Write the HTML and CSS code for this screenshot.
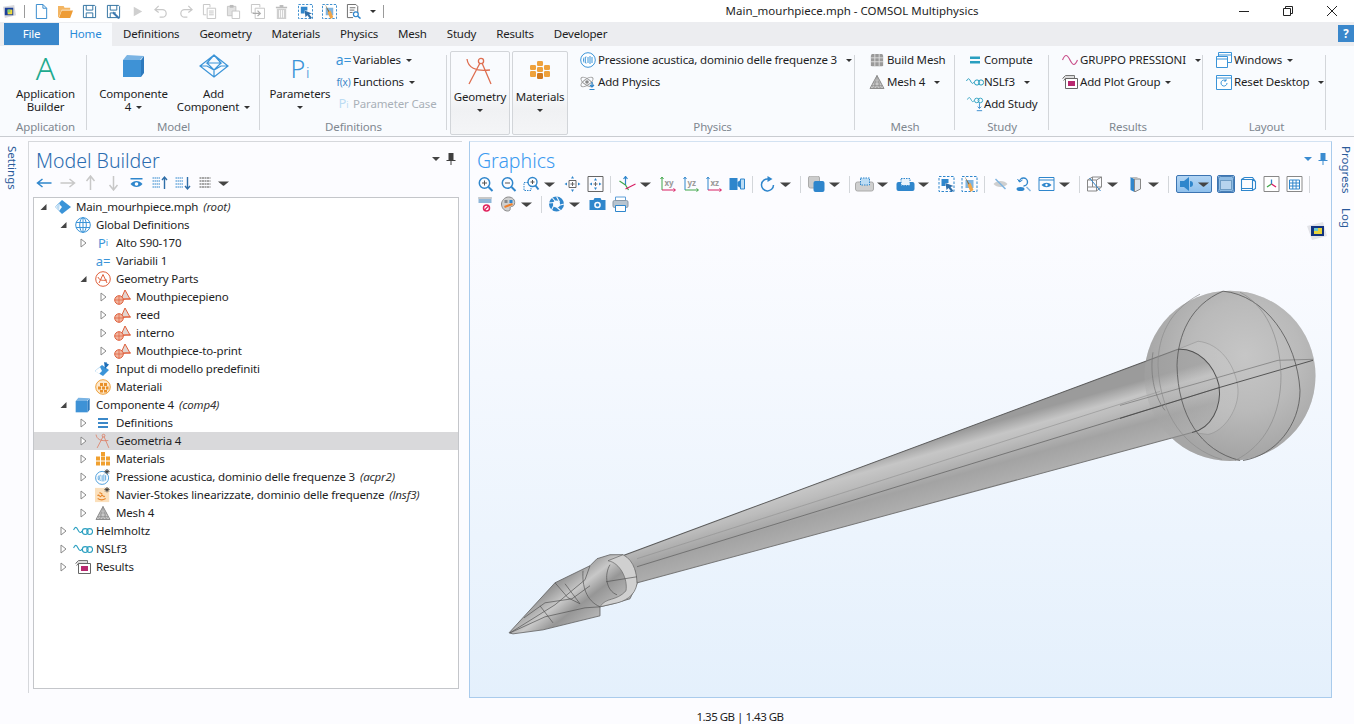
FILE: index.html
```html
<!DOCTYPE html>
<html lang="en">
<head>
<meta charset="utf-8">
<title>Main_mourhpiece.mph - COMSOL Multiphysics</title>
<link rel="stylesheet" href="styles.css">
</head>
<body>
<svg class="defs" width="0" height="0" aria-hidden="true">
<defs>
<symbol id="new" viewBox="0 0 16 16"><path d="M2.500 .5h7l4 4v11h-11z M9.500 .5v4h4" fill="#fff" stroke="#2f86cc"/></symbol>
<symbol id="open" viewBox="0 0 16 16"><path d="M0 2h6l1 2h6v2H4L1 14H0z" fill="#f3b562"/><path d="M4 7h12l-3 8H1z" fill="#ee9c35"/></symbol>
<symbol id="save" viewBox="0 0 16 16"><path d="M1.500 1.500h12l1 1v12h-13z" fill="#fff" stroke="#2c6f9f"/><path d="M4.500 1.500v5h7v-5M4.500 14.500v-5h7v5" fill="none" stroke="#2c6f9f"/></symbol>
<symbol id="saveas" viewBox="0 0 16 16"><path d="M1.500 1.500h12l1 1v12h-13z" fill="#fff" stroke="#2c6f9f"/><path d="M4.500 1.500v5h7v-5M4.500 14.500v-5h6" fill="none" stroke="#2c6f9f"/><path d="M8 8l7 7-2 1-6-6z" fill="#3d78b0"/></symbol>
<symbol id="play" viewBox="0 0 16 16"><path d="M4 3l9 5-9 5z" fill="#cfcfcf"/></symbol>
<symbol id="undo" viewBox="0 0 16 16"><path d="M5 2L1 6l4 3M1 6h8a4 4 0 0 1 0 8H6" fill="none" stroke="#c8c8c8" stroke-width="1.300"/></symbol>
<symbol id="redo" viewBox="0 0 16 16"><path d="M11 2l4 4-4 3M15 6H7a4 4 0 0 0 0 8h3" fill="none" stroke="#c8c8c8" stroke-width="1.300"/></symbol>
<symbol id="copy" viewBox="0 0 16 16"><path d="M1.500 .5h7v3M1.500 .5v11h3" fill="none" stroke="#c4c4c4"/><path d="M5.500 4.500h9v11h-9zM7.500 7.500h5M7.500 9.500h5M7.500 11.500h5" fill="#fff" stroke="#c4c4c4"/></symbol>
<symbol id="paste" viewBox="0 0 16 16"><path d="M1.500 2.500h9v10h-9z" fill="#e2e2e2" stroke="#c4c4c4"/><path d="M4 1h4v3H4z" fill="#bbb"/><path d="M6.500 7.500h8v8h-8z" fill="#fff" stroke="#c4c4c4"/></symbol>
<symbol id="dup" viewBox="0 0 16 16"><path d="M1.500 .5h9v3M1.500 .5v9h3M5.500 4.500h10v11h-10z" fill="none" stroke="#c4c4c4"/><path d="M3 10h8M8 7l3 3-3 3" fill="none" stroke="#aaa" stroke-width="1.300"/></symbol>
<symbol id="del" viewBox="0 0 16 16"><path d="M2 3h12v1.500H2zM6 1h4v2H6z" fill="#bdbdbd"/><path d="M3 5h10v11H3z" fill="#cfcfcf"/><path d="M6 6.500v8M8 6.500v8M10 6.500v8" stroke="#fff"/></symbol>
<symbol id="sel" viewBox="0 0 16 16"><path d="M.5 .5h15v15H.5z" fill="none" stroke="#2f86cc" stroke-dasharray="2.500 1.500"/><path d="M3 3h7v4L7 7v3H3z" fill="#2f86cc"/><path d="M7 7l8 3-3 1 3 4-2 1-3-4-2 2z" fill="#2f6ea8"/></symbol>
<symbol id="clr" viewBox="0 0 16 16"><path d="M.5 .5h15v15H.5z" fill="none" stroke="#2f86cc" stroke-dasharray="2.500 1.500"/><path d="M4 4h8v8H4z" fill="#7fb4e0"/><path d="M3 0l5 8-1 1z" fill="#8b6a35"/><path d="M6 9l3-2 3 7-3 2z" fill="#f0a64a"/></symbol>
<symbol id="find" viewBox="0 0 16 16"><path d="M1.500 .5h9l2 2v7M1.500 .5v14h6M4 4h6M4 6.500h5M4 9h3" fill="none" stroke="#666"/><circle cx="10.500" cy="11" r="2.600" fill="#fff" stroke="#2f86cc" stroke-width="1.300"/><path d="M12.500 13l3 2.500" stroke="#2f86cc" stroke-width="1.600"/></symbol>
<symbol id="logo" viewBox="0 0 16 16"><path d="M1 3l12-2 2 11-12 3z" fill="#d9d9dc"/><path d="M3 4h9v8H3z" fill="#1b3f9b"/><path d="M6 6h5v5H6z" fill="#f4d93c"/><path d="M6 6h3v3H6z" fill="#7ccf7a"/></symbol>
<symbol id="cube" viewBox="0 0 24 24"><path d="M5 1l17 1-4 4H1z" fill="#7ab4e4"/><path d="M1 6h18v17H1z" fill="#3e92d6"/><path d="M19 6l3-4v17l-3 4z" fill="#2d79bd"/></symbol>
<symbol id="addcomp" viewBox="0 0 30 24"><path d="M15 1l14 11-14 11L1 12zM15 1l-7 8h14zM8 9l7 7 7-7M1 12h7l7 4 7-4h7M15 16v7" fill="none" stroke="#3b94d8" stroke-width="1.200"/></symbol>
<symbol id="comp" viewBox="0 0 28 30"><circle cx="15" cy="5" r="2.600" fill="none" stroke="#de6e50" stroke-width="1.300"/><path d="M14 7L3 28M16 7l9 21M1 3c1 8 8 13 23 11" fill="none" stroke="#de6e50" stroke-width="1.300"/></symbol>
<symbol id="matl" viewBox="0 0 22 20"><g fill="#eea13c"><rect x="8" y="1" width="6" height="5" rx="1.200"/><rect x="1" y="5" width="6" height="5" rx="1.200"/><rect x="8" y="7" width="6" height="5" rx="1.200"/><rect x="15" y="5" width="6" height="5" rx="1.200"/><rect x="1" y="11" width="6" height="6" rx="1.200"/></g><rect x="8" y="13" width="6" height="6" rx="1.200" fill="#d27a1f"/><rect x="15" y="11" width="6" height="6" rx="1.200" fill="#eea13c"/></symbol>
<symbol id="acou" viewBox="0 0 16 16"><circle cx="8" cy="8" r="7.300" fill="#fff" stroke="#3b94d8"/><path d="M8 5v6M10 4v8M12 5v6M6 4.500c-1 2-1 5 0 7M4 5.500c-.6 1.600-.6 3.400 0 5" fill="none" stroke="#3b94d8"/></symbol>
<symbol id="addphys" viewBox="0 0 16 16"><g fill="none" stroke="#9a9a9a"><ellipse cx="7" cy="8" rx="7" ry="3" transform="rotate(35 7 8)"/><ellipse cx="7" cy="8" rx="7" ry="3" transform="rotate(-35 7 8)"/></g><circle cx="7" cy="8" r="1.800" fill="#888"/><path d="M12 8v5M10 11l2 2 2-2M9.500 15.500h5" fill="none" stroke="#2f86cc" stroke-width="1.200"/></symbol>
<symbol id="build" viewBox="0 0 16 16"><path d="M2 1h12l1 2v11l-1 1H2l-1-1V3z" fill="#9a9a9a"/><path d="M1 5.500h14M1 10h14M5.500 1v14M10.500 1v14" stroke="#e0e0e0"/></symbol>
<symbol id="mesh" viewBox="0 0 16 16"><path d="M8 1.500l7 13H1z" fill="#c9c9c9" stroke="#8d8d8d"/><path d="M4.500 8h7M3 11.500h10M8 1.500L5 14.500M8 1.500l3 13M4.500 8L8 14.500 11.500 8M3 11.500L5 14.500M13 11.500l-2 3" fill="none" stroke="#8d8d8d" stroke-width=".6"/></symbol>
<symbol id="compute" viewBox="0 0 16 16"><path d="M3 4.500h10v2.500H3zM3 9h10v2.500H3z" fill="#2a9fc0"/></symbol>
<symbol id="study" viewBox="0 0 18 12"><path d="M.5 5C2 2 3 2 4.500 5S7 8 8 6" fill="none" stroke="#2a9fc0"/><circle cx="11" cy="6.500" r="2.600" fill="none" stroke="#2a9fc0"/><circle cx="15" cy="6.500" r="2.600" fill="none" stroke="#2a9fc0"/></symbol>
<symbol id="addstudy" viewBox="0 0 18 18"><path d="M.5 4C2 1 3 1 4.500 4S7 7 8 5" fill="none" stroke="#2a9fc0"/><circle cx="11" cy="5" r="2.600" fill="none" stroke="#2a9fc0"/><circle cx="15" cy="5" r="2.600" fill="none" stroke="#2a9fc0"/><path d="M14 8v6M12 12l2 2 2-2M11 16.500h6" fill="none" stroke="#2f86cc"/></symbol>
<symbol id="plot" viewBox="0 0 16 10"><path d="M.5 5C3-1 5-1 8 5s5 6 7.500 0" fill="none" stroke="#c94f8a" stroke-width="1.200"/></symbol>
<symbol id="addplot" viewBox="0 0 16 16"><path d="M.5 4.500l3-3h9v9" fill="#ddd" stroke="#777"/><path d="M1.500 6.500l2-2h10v9" fill="#eee" stroke="#777"/><path d="M3.500 4.500h12v10h-12z" fill="#fff" stroke="#666"/><path d="M6 7h7v5H6z" fill="#b8286f"/></symbol>
<symbol id="win" viewBox="0 0 16 16"><path d="M2.500 .5h13v10h-13zM2.500 3h13" fill="#fff" stroke="#3b94d8"/><path d="M.5 4.500h11v11H.5zM.5 7h11" fill="#fff" stroke="#3b94d8"/></symbol>
<symbol id="reset" viewBox="0 0 16 16"><path d="M.5 1.500h15v14H.5zM.5 4h15" fill="#fff" stroke="#3b94d8"/><path d="M11 9a3 3 0 1 1-1-2.200M10 5v2H8" fill="none" stroke="#3b94d8"/></symbol>
<symbol id="root" viewBox="0 0 18 16"><path d="M1 8l7-7 9 7-9 7z" fill="#3b94d8"/><path d="M1 8l4-3 3 3-3 4z" fill="#fff"/><path d="M2 8l4-4-1 8z" fill="#bcdcf4"/></symbol>
<symbol id="globe" viewBox="0 0 16 16"><circle cx="8" cy="8" r="7.300" fill="#fff" stroke="#3b94d8"/><ellipse cx="8" cy="8" rx="3.300" ry="7.300" fill="none" stroke="#3b94d8"/><path d="M8 .7v14.600M1 5.500h14M1 10.500h14" stroke="#3b94d8"/></symbol>
<symbol id="gparts" viewBox="0 0 16 16"><circle cx="8" cy="8" r="7.300" fill="#fff" stroke="#e0603c"/><path d="M8 3.500L4 12M8 3.500L12 12M3 6c1 3 4 4 9 3" fill="none" stroke="#e0603c"/></symbol>
<symbol id="part" viewBox="0 0 18 16"><path d="M11 1l5 9H7z" fill="#e3d5d0" stroke="#e0603c"/><path d="M6 11l6-1h5" fill="none" stroke="#e0603c"/><circle cx="5" cy="11" r="4.300" fill="#f0b49d" stroke="#e0603c"/><path d="M.7 11h8.600M5 6.700v8.600" stroke="#e0603c" stroke-width=".7"/></symbol>
<symbol id="input" viewBox="0 0 18 16"><path d="M1 10l7-6 7 5-6 6z" fill="#3b94d8"/><path d="M1 10l5-4 2 4-3 3z" fill="#fff"/><path d="M10 1l5 2.500L11 8z" fill="#1f6fb8"/><path d="M12 1v5" stroke="#1f6fb8"/></symbol>
<symbol id="matcirc" viewBox="0 0 16 16"><circle cx="8" cy="8" r="7.300" fill="#fde8cc" stroke="#eea13c"/><path d="M5 4h3v3H5zM9 4h3v3H9zM3 7.500h3v3H3zM7 7.500h3v3H7zM11 7.500h2.500v3H11zM5 11h3v2.500H5zM9 11h3v2.500H9z" fill="#e8902a"/></symbol>
<symbol id="lines" viewBox="0 0 16 16"><path d="M3 3h10v2H3zM3 7h10v2H3zM3 11h10v2H3z" fill="#3b88c8"/></symbol>
<symbol id="matsq" viewBox="0 0 16 16"><path d="M6 1h4v4H6zM1 5.500h4v4H1zM6 5.500h4v4H6zM11 5.500h4v4h-4zM1 10.500h4v4H1zM6 10.500h4v4H6zM11 10.500h4v4h-4z" fill="#f0a030"/></symbol>
<symbol id="acast" viewBox="0 0 18 18"><circle cx="8" cy="10" r="7.300" fill="#fff" stroke="#3b94d8"/><path d="M8 7v7M10 6v8M12 7v6M6 6.500c-1 2-1 5 0 7M4 7.500c-.6 1.600-.6 3.400 0 5" fill="none" stroke="#3b94d8" stroke-width=".9"/><path d="M13.500 0v6M10.500 3h6M11.500 1l4 4M15.500 1l-4 4" stroke="#333" stroke-width="1"/></symbol>
<symbol id="navier" viewBox="0 0 18 18"><path d="M0 1h16v16H0z" fill="#fbe0bc"/><path d="M3 13c3 2 6 2 9 0M3 10c1-3 3 3 4 0s3 3 4 0M5 7c1-2 2 2 3 0" fill="none" stroke="#e8862a" stroke-width="1.200"/><path d="M13.500 0v6M10.500 3h6M11.500 1l4 4M15.500 1l-4 4" stroke="#333" stroke-width="1"/></symbol>
<symbol id="back" viewBox="0 0 16 16"><path d="M1 8h14M6 4L1 8l5 4" fill="none" stroke="#2f86cc" stroke-width="1.500"/></symbol>
<symbol id="fwd" viewBox="0 0 16 16"><path d="M1 8h14M10 4l5 4-5 4" fill="none" stroke="#c8c8c8" stroke-width="1.500"/></symbol>
<symbol id="up" viewBox="0 0 16 16"><path d="M8 15V1M4 6l4-5 4 5" fill="none" stroke="#c8c8c8" stroke-width="1.500"/></symbol>
<symbol id="down" viewBox="0 0 16 16"><path d="M8 1v14M4 10l4 5 4-5" fill="none" stroke="#c8c8c8" stroke-width="1.500"/></symbol>
<symbol id="eye" viewBox="0 0 16 16"><path d="M2 3h12v1.500H2z" fill="#2f86cc"/><path d="M2 9c3-4 9-4 12 0-3 4-9 4-12 0z" fill="#2f86cc"/><circle cx="8" cy="9" r="1.800" fill="#fff"/></symbol>
<symbol id="treeup" viewBox="0 0 16 16"><path d="M1 3h8M1 6h8M1 9h8M1 12h8" stroke="#2f86cc" stroke-dasharray="1.500 .5"/><path d="M13 14V3M10.500 5L13 2l2.500 3" fill="none" stroke="#2f6ea8" stroke-width="1.400"/></symbol>
<symbol id="treedn" viewBox="0 0 16 16"><path d="M1 3h8M1 6h8M1 9h8M1 12h8" stroke="#2f86cc" stroke-dasharray="1.500 .5"/><path d="M13 2v11M10.500 11l2.500 3 2.500-3" fill="none" stroke="#2f6ea8" stroke-width="1.400"/></symbol>
<symbol id="treelist" viewBox="0 0 16 16"><path d="M2 3h11M2 6h11M2 9h11M2 12h11" stroke="#8a8a8a" stroke-width="1.300" stroke-dasharray="2 .5"/></symbol>
<symbol id="zin" viewBox="0 0 16 16"><circle cx="7" cy="7" r="5.200" fill="none" stroke="#2f86cc" stroke-width="1.500"/><path d="M4.500 7h5M7 4.500v5" stroke="#555"/><path d="M11 11l4 4" stroke="#2f86cc" stroke-width="2"/></symbol>
<symbol id="zout" viewBox="0 0 16 16"><circle cx="7" cy="7" r="5.200" fill="none" stroke="#2f86cc" stroke-width="1.500"/><path d="M4.500 7h5" stroke="#555"/><path d="M11 11l4 4" stroke="#2f86cc" stroke-width="2"/></symbol>
<symbol id="zbox" viewBox="0 0 16 16"><path d="M.5 6.500h7v8h-7z" fill="none" stroke="#2f86cc" stroke-dasharray="1.500 1"/><circle cx="9" cy="6" r="4.500" fill="#fff" stroke="#2f86cc" stroke-width="1.400"/><path d="M7 6h4M9 4v4" stroke="#555"/><path d="M12 9.500l3 4" stroke="#2f86cc" stroke-width="2"/></symbol>
<symbol id="zsel" viewBox="0 0 16 16"><path d="M4.500 4.500h7v7h-7zM6 8h4M8 6v4" fill="#fff" stroke="#666"/><path d="M8 0l1.500 2.500h-3zM8 16l-1.500-2.500h3zM0 8l2.500-1.500v3zM16 8l-2.500 1.500v-3z" fill="#2f86cc"/></symbol>
<symbol id="zext" viewBox="0 0 16 16"><path d="M.5 .5h15v15H.5z" fill="none" stroke="#666"/><path d="M6 8h4M8 6v4" stroke="#666"/><path d="M8 2l1.500 2.500h-3zM8 14l-1.500-2.500h3zM2 8l2.500-1.500v3zM14 8l-2.500 1.500v-3z" fill="#2f86cc"/></symbol>
<symbol id="axes" viewBox="0 0 18 16"><path d="M7 9V1M5 3l2-2.500L9 3" fill="none" stroke="#2f86cc" stroke-width="1.200"/><path d="M7 9l-6-4" stroke="#3fa648" stroke-width="1.200"/><path d="M7 9l3 5" stroke="#3fa648" stroke-width="1.200"/><path d="M7 13l10-5" stroke="#d81e63" stroke-width="1.200"/></symbol>
<symbol id="pxy" viewBox="0 0 16 16"><path d="M1.500 2v12" stroke="#3fa648"/><path d="M1.500 14h13M13 12.500l2 1.500-2 1.500" fill="none" stroke="#d81e63"/><path d="M0 3l1.500-2L3 3" fill="none" stroke="#3fa648"/><text x="4" y="10" class="axt">xy</text></symbol>
<symbol id="pyz" viewBox="0 0 16 16"><path d="M1.500 2v12" stroke="#2f86cc"/><path d="M0 3l1.500-2L3 3" fill="none" stroke="#2f86cc"/><path d="M1.500 14h13M13 12.500l2 1.500-2 1.500" fill="none" stroke="#3fa648"/><text x="4" y="10" class="axt">yz</text></symbol>
<symbol id="pxz" viewBox="0 0 16 16"><path d="M1.500 2v12" stroke="#2f86cc"/><path d="M0 3l1.500-2L3 3" fill="none" stroke="#2f86cc"/><path d="M1.500 14h13M13 12.500l2 1.500-2 1.500" fill="none" stroke="#d81e63"/><text x="4" y="10" class="axt">xz</text></symbol>
<symbol id="cam" viewBox="0 0 16 16"><path d="M0 2h8v12H0z" fill="#2f86cc"/><path d="M8 6l3-2v8l-3-2z" fill="#2f86cc"/><path d="M11 3h4v10h-4z" fill="#bcdcf4" stroke="#2f86cc"/></symbol>
<symbol id="rot" viewBox="0 0 16 16"><path d="M9 3a6 6 0 1 0 5 6" fill="none" stroke="#2f86cc" stroke-width="1.500"/><path d="M8 0l5 3-5 3z" fill="#2f86cc"/></symbol>
<symbol id="trans" viewBox="0 0 16 16"><rect x="0" y="0" width="11" height="12" rx="2" fill="#ccc" stroke="#aaa"/><rect x="5" y="5" width="11" height="11" rx="2" fill="#2f86cc"/></symbol>
<symbol id="tray" viewBox="0 0 18 16"><path d="M0 8a2 2 0 0 1 2-2h14a2 2 0 0 1 2 2v5a2 2 0 0 1-2 2H2a2 2 0 0 1-2-2z" fill="#cfcfcf" stroke="#aaa"/><path d="M5 2h9v7H5z" fill="#bcdcf4" stroke="#2f86cc" stroke-dasharray="1.500 1"/></symbol>
<symbol id="trayb" viewBox="0 0 18 16"><path d="M0 8a2 2 0 0 1 2-2h14a2 2 0 0 1 2 2v5a2 2 0 0 1-2 2H2a2 2 0 0 1-2-2z" fill="#2f86cc"/><path d="M4.500 2.500h9v7h-9z" fill="#e8f2fb" stroke="#2f86cc" stroke-dasharray="1.500 1"/></symbol>
<symbol id="hide" viewBox="0 0 16 16"><path d="M1 8c3-4 11-4 14 0-3 4-11 4-14 0z" fill="#cfcfcf"/><path d="M3 3l10 10" stroke="#7fb4e0" stroke-width="1.500"/></symbol>
<symbol id="rehide" viewBox="0 0 16 16"><path d="M4 6a4 4 0 1 1 4 4" fill="none" stroke="#2f86cc" stroke-width="1.400"/><path d="M2 3l2 3 3-2" fill="none" stroke="#2f86cc"/><ellipse cx="5" cy="13" rx="4" ry="2" fill="#2f86cc"/><path d="M11 11l4 4" stroke="#7fb4e0" stroke-width="1.400"/></symbol>
<symbol id="wineye" viewBox="0 0 16 16"><path d="M.5 1.500h15v13H.5zM.5 4h15" fill="none" stroke="#2f86cc"/><path d="M3 9c3-3 7-3 10 0-3 3-7 3-10 0z" fill="#2f86cc"/><circle cx="8" cy="9" r="1.200" fill="#fff"/></symbol>
<symbol id="wire" viewBox="0 0 16 16"><path d="M1 4l5-3h9v10l-5 4H1zM1 4h9v11M10 4l5-3M6 1v10H1M6 11h9" fill="none" stroke="#888"/><path d="M3 2l11 13" stroke="#2f86cc"/></symbol>
<symbol id="planes" viewBox="0 0 16 16"><path d="M3 1l4 2v13l-4-2z" fill="#2f86cc"/><path d="M7 3h6v10l-6 3z" fill="#dfe6ec" stroke="#888"/><path d="M3 1h6l4 2H7z" fill="#bbb"/></symbol>
<symbol id="speaker" viewBox="0 0 16 16"><path d="M1 5h4l5-4v14l-5-4H1z" fill="#2f86cc"/><path d="M11 5a3 3 0 0 1 0 6z" fill="#2f86cc"/></symbol>
<symbol id="box" viewBox="0 0 16 16"><rect x=".5" y=".5" width="15" height="15" rx="2" fill="#8fbce4" stroke="#4a7fb5"/><rect x="2.500" y="4.500" width="11" height="9" fill="#b7d4ee" stroke="#6e9cc4"/></symbol>
<symbol id="boxb" viewBox="0 0 16 16"><path d="M1 3.500h11l3 2v7l-3 2H1zM4 1.500h8l3 4M1 3.500l3-2M12 3.500v11M1 12.500h11" fill="none" stroke="#2f86cc" stroke-width="1.100"/></symbol>
<symbol id="axbox" viewBox="0 0 16 16"><path d="M.5 .5h15v15H.5z" fill="#fff" stroke="#888"/><path d="M8 8V3.500" stroke="#2f86cc" stroke-width="1.300"/><path d="M8 8L3.500 11" stroke="#3fa648" stroke-width="1.300"/><path d="M8 8l4.500 3" stroke="#d81e63" stroke-width="1.300"/></symbol>
<symbol id="grid" viewBox="0 0 16 16"><path d="M.5 .5h15v15H.5z" fill="#fff" stroke="#888"/><path d="M3 4h10v9H3zM3 7h10M3 10h10M6.300 4v9M9.600 4v9" fill="none" stroke="#2f86cc"/></symbol>
<symbol id="noscene" viewBox="0 0 16 16"><path d="M1 1h13v6H1z" fill="#8fb6d8"/><path d="M1 1h13v2H1z" fill="#c8c8c8"/><circle cx="9" cy="12" r="3" fill="#fff" stroke="#e0245e" stroke-width="1.500"/><path d="M7 14l4-4" stroke="#e0245e" stroke-width="1.200"/></symbol>
<symbol id="palette" viewBox="0 0 16 16"><path d="M8 1c4 0 7 3 6 7-1 3-3 2-4 3s1 4-3 4-6-4-6-7 3-7 7-7z" fill="#cfcfcf" stroke="#888"/><rect x="4" y="4" width="3" height="3" fill="#888"/><rect x="9" y="4" width="3" height="3" fill="#2f86cc"/><path d="M4 11l8-3" stroke="#ee7f2c" stroke-width="2"/></symbol>
<symbol id="aperture" viewBox="0 0 16 16"><circle cx="8" cy="8" r="7.500" fill="#2f86cc"/><circle cx="8" cy="8" r="3.500" fill="#fafbff"/><path d="M8 .5L11 6M15.500 8L10 9.500M12 14.500L8 11M3 14L5.500 9M.5 7L6 6.500M4 2l3 3.500" stroke="#fafbff" stroke-width="1.100"/></symbol>
<symbol id="camera" viewBox="0 0 16 16"><path d="M0 4h4l1-2h6l1 2h4v10H0z" fill="#2f86cc"/><circle cx="8" cy="9" r="3.300" fill="#fafbff"/><circle cx="8" cy="9" r="1.800" fill="#2f86cc"/></symbol>
<symbol id="print" viewBox="0 0 16 16"><path d="M3 1h10v4H3z" fill="#fff" stroke="#5e9fd8"/><rect x=".5" y="4.500" width="15" height="7" rx="1.500" fill="#b8c4cf" stroke="#8a99a8"/><path d="M3 9.500h10v6H3z" fill="#fff" stroke="#2f86cc"/></symbol>
<symbol id="tw-open" viewBox="0 0 10 10"><path d="M8 2v6H2z" fill="#444"/></symbol>
<symbol id="tw-shut" viewBox="0 0 10 10"><path d="M2.500 1l5 4-5 4z" fill="#fff" stroke="#8a8a8a"/></symbol>
<symbol id="pin" viewBox="0 0 10 12"><path d="M2.500 0h5v7h2v1h-4v4h-1V8h-4V7h2z" fill="#3a8bd0"/></symbol>
<symbol id="colorcard" viewBox="0 0 20 18"><path d="M0 4l16-4 4 14-15 4z" fill="#e2e3e8"/><path d="M4 4h13v10H4z" fill="#12337f"/><path d="M7 6h8v6H7z" fill="#e8d43a"/><path d="M7 6h4v3H7z" fill="#6cc8d0"/></symbol>
</defs>
</svg>

<header class="titlebar">
  <div class="quick">
    <svg class="qi logo"><use href="#logo"/></svg>
    <span class="qsep"></span>
    <span class="q"><svg class="qi"><use href="#new"/></svg></span>
    <span class="q"><svg class="qi"><use href="#open"/></svg></span>
    <span class="q"><svg class="qi"><use href="#save"/></svg></span>
    <span class="q"><svg class="qi"><use href="#saveas"/></svg></span>
    <span class="q"><svg class="qi"><use href="#play"/></svg></span>
    <span class="q"><svg class="qi"><use href="#undo"/></svg></span>
    <span class="q"><svg class="qi"><use href="#redo"/></svg></span>
    <span class="q"><svg class="qi"><use href="#copy"/></svg></span>
    <span class="q"><svg class="qi"><use href="#paste"/></svg></span>
    <span class="q"><svg class="qi"><use href="#dup"/></svg></span>
    <span class="q"><svg class="qi"><use href="#del"/></svg></span>
    <span class="q"><svg class="qi"><use href="#sel"/></svg></span>
    <span class="q"><svg class="qi"><use href="#clr"/></svg></span>
    <span class="q"><svg class="qi"><use href="#find"/></svg></span>
    <span class="arrow qarrow"></span>
    <span class="qsep qsep-end"></span>
  </div>
  <div class="title">Main_mourhpiece.mph - COMSOL Multiphysics</div>
  <div class="winctl">
    <span class="wc"><svg width="12" height="12" viewBox="0 0 12 12"><path d="M1 6.500h10" stroke="#222"/></svg></span>
    <span class="wc"><svg width="12" height="12" viewBox="0 0 12 12"><path d="M1.500 3.500h7v7h-7zM3.500 3.500v-2h7v7h-2" fill="none" stroke="#222"/></svg></span>
    <span class="wc"><svg width="12" height="12" viewBox="0 0 12 12"><path d="M1 1l10 10M11 1L1 11" stroke="#222"/></svg></span>
  </div>
</header>

<nav class="tabs">
  <span class="tab file">File</span>
  <span class="tab home">Home</span>
  <span class="tab">Definitions</span>
  <span class="tab">Geometry</span>
  <span class="tab">Materials</span>
  <span class="tab">Physics</span>
  <span class="tab">Mesh</span>
  <span class="tab">Study</span>
  <span class="tab">Results</span>
  <span class="tab">Developer</span>
  <span class="help">?</span>
</nav>

<section class="ribbon">
  <div class="group g-app">
    <div class="gbody center">
      <div class="big"><span class="bigicon"><span class="glyph-a">A</span></span><span class="blabel">Application<br>Builder</span></div>
    </div>
    <div class="glabel">Application</div>
  </div>
  <div class="group g-model">
    <div class="gbody center">
      <div class="big w80"><span class="bigicon"><svg class="ic24"><use href="#cube"/></svg></span><span class="blabel">Componente<br>4<i class="arrow"></i></span></div>
      <div class="big w80"><span class="bigicon"><svg class="ic30"><use href="#addcomp"/></svg></span><span class="blabel">Add<br>Component<i class="arrow"></i></span></div>
    </div>
    <div class="glabel">Model</div>
  </div>
  <div class="group g-def">
    <div class="gbody">
      <div class="big w70"><span class="bigicon"><span class="glyph-p">P<small>i</small></span></span><span class="blabel">Parameters<br><i class="arrow solo"></i></span></div>
      <div class="col">
        <div class="small"><span class="sicon w17"><span class="glyph-as">a=</span></span>Variables<i class="arrow"></i></div>
        <div class="small"><span class="sicon w17"><span class="glyph-f">f(x)</span></span>Functions<i class="arrow"></i></div>
        <div class="small off"><span class="sicon w17"><span class="glyph-pi">P<small>i</small></span></span>Parameter Case</div>
      </div>
    </div>
    <div class="glabel">Definitions</div>
  </div>
  <div class="g-toggle">
    <div class="toggle t-geo"><span class="tglicon"><svg class="ic28"><use href="#comp"/></svg></span><span class="blabel">Geometry<br><i class="arrow solo"></i></span></div>
    <div class="toggle t-mat"><span class="tglicon"><svg class="ic22"><use href="#matl"/></svg></span><span class="blabel">Materials<br><i class="arrow solo"></i></span></div>
  </div>
  <div class="group g-phys">
    <div class="gbody">
      <div class="col">
        <div class="small"><span class="sicon"><svg class="ic16"><use href="#acou"/></svg></span>Pressione acustica, dominio delle frequenze 3<i class="arrow a-9"></i></div>
        <div class="small"><span class="sicon"><svg class="ic16"><use href="#addphys"/></svg></span>Add Physics</div>
      </div>
    </div>
    <div class="glabel">Physics</div>
  </div>
  <div class="group g-mesh">
    <div class="gbody">
      <div class="col">
        <div class="small"><span class="sicon"><svg class="ic14"><use href="#build"/></svg></span>Build Mesh</div>
        <div class="small"><span class="sicon"><svg class="ic16"><use href="#mesh"/></svg></span>Mesh 4<i class="arrow a-9"></i></div>
      </div>
    </div>
    <div class="glabel">Mesh</div>
  </div>
  <div class="group g-study">
    <div class="gbody">
      <div class="col">
        <div class="small"><span class="sicon w18"><svg class="ic16"><use href="#compute"/></svg></span>Compute</div>
        <div class="small"><span class="sicon w18"><svg class="ic18"><use href="#study"/></svg></span>NSLf3<i class="arrow a-9"></i></div>
        <div class="small"><span class="sicon w18"><svg class="ic18"><use href="#addstudy"/></svg></span>Add Study</div>
      </div>
    </div>
    <div class="glabel">Study</div>
  </div>
  <div class="group g-res">
    <div class="gbody">
      <div class="col">
        <div class="small"><span class="sicon"><svg class="ic16"><use href="#plot"/></svg></span>GRUPPO PRESSIONI<i class="arrow a-9"></i></div>
        <div class="small"><span class="sicon"><svg class="ic16"><use href="#addplot"/></svg></span>Add Plot Group<i class="arrow"></i></div>
      </div>
    </div>
    <div class="glabel">Results</div>
  </div>
  <div class="group g-lay">
    <div class="gbody">
      <div class="col">
        <div class="small"><span class="sicon"><svg class="ic16"><use href="#win"/></svg></span>Windows<i class="arrow"></i></div>
        <div class="small"><span class="sicon"><svg class="ic16"><use href="#reset"/></svg></span>Reset Desktop<i class="arrow a-9"></i></div>
      </div>
    </div>
    <div class="glabel">Layout</div>
  </div>
</section>

<main class="main">
  <aside class="strip strip-l"><span class="vtext">Settings</span></aside>

  <section class="panel model">
    <div class="phead"><h2 class="ptitle mb">Model Builder</h2><span class="pctl"><i class="arrow dk"></i><svg class="pinic dkpin"><use href="#pin"/></svg></span></div>
    <div class="tbar mbar">
      <svg class="ti"><use href="#back"/></svg>
      <svg class="ti"><use href="#fwd"/></svg>
      <svg class="ti"><use href="#up"/></svg>
      <svg class="ti"><use href="#down"/></svg>
      <svg class="ti"><use href="#eye"/></svg>
      <svg class="ti"><use href="#treeup"/></svg>
      <svg class="ti"><use href="#treedn"/></svg>
      <svg class="ti"><use href="#treelist"/></svg>
      <i class="drop"></i>
    </div>
    <div class="tree">
      <div class="row l0"><svg class="tw"><use href="#tw-open"/></svg><svg class="ri"><use href="#root"/></svg><span class="rt">Main_mourhpiece.mph</span><em>(root)</em></div>
      <div class="row l1"><svg class="tw"><use href="#tw-open"/></svg><svg class="ri"><use href="#globe"/></svg><span class="rt">Global Definitions</span></div>
      <div class="row l2"><svg class="tw"><use href="#tw-shut"/></svg><span class="ri gl-p">P<small>i</small></span><span class="rt">Alto S90-170</span></div>
      <div class="row l2"><span class="tw"></span><span class="ri gl-a">a=</span><span class="rt">Variabili 1</span></div>
      <div class="row l2"><svg class="tw"><use href="#tw-open"/></svg><svg class="ri"><use href="#gparts"/></svg><span class="rt">Geometry Parts</span></div>
      <div class="row l3"><svg class="tw"><use href="#tw-shut"/></svg><svg class="ri"><use href="#part"/></svg><span class="rt">Mouthpiecepieno</span></div>
      <div class="row l3"><svg class="tw"><use href="#tw-shut"/></svg><svg class="ri"><use href="#part"/></svg><span class="rt">reed</span></div>
      <div class="row l3"><svg class="tw"><use href="#tw-shut"/></svg><svg class="ri"><use href="#part"/></svg><span class="rt">interno</span></div>
      <div class="row l3"><svg class="tw"><use href="#tw-shut"/></svg><svg class="ri"><use href="#part"/></svg><span class="rt">Mouthpiece-to-print</span></div>
      <div class="row l2"><span class="tw"></span><svg class="ri"><use href="#input"/></svg><span class="rt">Input di modello predefiniti</span></div>
      <div class="row l2"><span class="tw"></span><svg class="ri"><use href="#matcirc"/></svg><span class="rt">Materiali</span></div>
      <div class="row l1"><svg class="tw"><use href="#tw-open"/></svg><svg class="ri"><use href="#cube"/></svg><span class="rt">Componente 4</span><em>(comp4)</em></div>
      <div class="row l2"><svg class="tw"><use href="#tw-shut"/></svg><svg class="ri"><use href="#lines"/></svg><span class="rt">Definitions</span></div>
      <div class="row l2 picked"><svg class="tw"><use href="#tw-shut"/></svg><svg class="ri"><use href="#comp"/></svg><span class="rt">Geometria 4</span></div>
      <div class="row l2"><svg class="tw"><use href="#tw-shut"/></svg><svg class="ri"><use href="#matsq"/></svg><span class="rt">Materials</span></div>
      <div class="row l2"><svg class="tw"><use href="#tw-shut"/></svg><svg class="ri"><use href="#acast"/></svg><span class="rt">Pressione acustica, dominio delle frequenze 3</span><em>(acpr2)</em></div>
      <div class="row l2"><svg class="tw"><use href="#tw-shut"/></svg><svg class="ri"><use href="#navier"/></svg><span class="rt">Navier-Stokes linearizzate, dominio delle frequenze</span><em>(lnsf3)</em></div>
      <div class="row l2"><svg class="tw"><use href="#tw-shut"/></svg><svg class="ri"><use href="#mesh"/></svg><span class="rt">Mesh 4</span></div>
      <div class="row l1"><svg class="tw"><use href="#tw-shut"/></svg><svg class="ri"><use href="#study"/></svg><span class="rt">Helmholtz</span></div>
      <div class="row l1"><svg class="tw"><use href="#tw-shut"/></svg><svg class="ri"><use href="#study"/></svg><span class="rt">NSLf3</span></div>
      <div class="row l1"><svg class="tw"><use href="#tw-shut"/></svg><svg class="ri"><use href="#addplot"/></svg><span class="rt">Results</span></div>
    </div>
  </section>

  <section class="panel graphics">
    <div class="phead"><h2 class="ptitle gr">Graphics</h2><span class="pctl"><i class="arrow bl"></i><svg class="pinic"><use href="#pin"/></svg></span></div>
    <div class="tbar grow1">
      <svg class="ti"><use href="#zin"/></svg><svg class="ti"><use href="#zout"/></svg><svg class="ti"><use href="#zbox"/></svg><i class="drop"></i>
      <svg class="ti"><use href="#zsel"/></svg><svg class="ti"><use href="#zext"/></svg><span class="tsep tsep-w"></span>
      <svg class="ti"><use href="#axes"/></svg><i class="drop"></i>
      <svg class="ti"><use href="#pxy"/></svg><svg class="ti"><use href="#pyz"/></svg><svg class="ti"><use href="#pxz"/></svg><svg class="ti"><use href="#cam"/></svg><span class="tsep"></span>
      <svg class="ti"><use href="#rot"/></svg><i class="drop"></i><span class="tsep"></span>
      <svg class="ti"><use href="#trans"/></svg><i class="drop"></i><span class="tsep"></span>
      <svg class="ti"><use href="#tray"/></svg><i class="drop"></i>
      <svg class="ti"><use href="#trayb"/></svg><i class="drop"></i>
      <svg class="ti"><use href="#sel"/></svg><svg class="ti"><use href="#clr"/></svg><span class="tsep"></span>
      <svg class="ti"><use href="#hide"/></svg><svg class="ti"><use href="#rehide"/></svg><svg class="ti"><use href="#wineye"/></svg><i class="drop"></i><span class="tsep"></span>
      <svg class="ti"><use href="#wire"/></svg><i class="drop"></i>
      <svg class="ti"><use href="#planes"/></svg><i class="drop"></i><span class="tsep"></span>
      <span class="act act-w"><svg class="ti14"><use href="#speaker"/></svg><i class="drop drop-in"></i></span>
      <span class="act act-b"><svg class="ti16"><use href="#box"/></svg></span>
      <svg class="ti"><use href="#boxb"/></svg><svg class="ti"><use href="#axbox"/></svg><svg class="ti"><use href="#grid"/></svg><span class="tsep"></span>
    </div>
    <div class="tbar grow2">
      <svg class="ti"><use href="#noscene"/></svg><svg class="ti"><use href="#palette"/></svg><i class="drop"></i><span class="tsep"></span>
      <svg class="ti"><use href="#aperture"/></svg><i class="drop"></i>
      <svg class="ti"><use href="#camera"/></svg><svg class="ti"><use href="#print"/></svg>
    </div>
    <div class="canvas">
      <svg class="cornercard"><use href="#colorcard"/></svg>
      <svg class="scene" viewBox="470 214 861 482" preserveAspectRatio="none">
        <defs>
          <linearGradient id="tube" gradientUnits="userSpaceOnUse" x1="900" y1="448" x2="918" y2="512">
            <stop offset="0" stop-color="#9b9b9b"/><stop offset=".2" stop-color="#c6c6c6"/><stop offset=".36" stop-color="#bcbcbc"/><stop offset=".62" stop-color="#a3a3a3"/><stop offset="1" stop-color="#b2b2b2"/>
          </linearGradient>
          <radialGradient id="ball" gradientUnits="userSpaceOnUse" cx="1245" cy="355" r="100">
            <stop offset="0" stop-color="#c6c6c6"/><stop offset=".55" stop-color="#bababa"/><stop offset="1" stop-color="#a6a6a6"/>
          </radialGradient>
          <linearGradient id="tip" gradientUnits="userSpaceOnUse" x1="555" y1="580" x2="590" y2="625">
            <stop offset="0" stop-color="#8d8d8d"/><stop offset=".35" stop-color="#c8c8c8"/><stop offset=".6" stop-color="#969696"/><stop offset="1" stop-color="#b9b9b9"/>
          </linearGradient>
        </defs>
        <ellipse cx="1230" cy="375.500" rx="85.500" ry="85" fill="url(#ball)"/>
        <path d="M1198 341c22 2 38 24 40 48 1 20-14 42-30 45L1192 432 1178 349z" fill="#c9c9c9" fill-opacity=".55" stroke="#909090" stroke-width=".8"/>
        <path d="M620 556L1178 349C1198 348 1214 364 1219 385 1222 407 1211 428 1192 432L630 584z" fill="url(#tube)"/>
        <path d="M620 556L1178 349" fill="none" stroke="#5a5a5a"/>
        <path d="M630 584L1192 432" fill="none" stroke="#777"/>
        <path d="M637 566L1220 387" fill="none" stroke="#666" stroke-width=".8"/>
        <path d="M637 558L1160 391" fill="none" stroke="#8e8e8e" stroke-width=".6"/>
        <ellipse cx="1230" cy="375.500" rx="85.500" ry="85" fill="url(#ball)" fill-opacity=".35"/>
        <path d="M1178 349c20-1 36 15 41 36 3 22-8 43-27 47" fill="none" stroke="#505050"/>
        <path d="M1120 405L1278 360 1313 359" fill="none" stroke="#808080" stroke-width=".8"/>
        <path d="M1120 418L1220 387 1313 360" fill="none" stroke="#484848" stroke-width=".9"/>
        <path d="M1223 291C1190 305 1178 335 1177 365 1178 415 1200 450 1240 460" fill="none" stroke="#555" stroke-width=".8"/>
        <path d="M1200 294C1170 310 1158 335 1158 365 1160 415 1185 448 1222 459" fill="none" stroke="#8c8c8c" stroke-width=".7"/>
        <path d="M1223 291C1265 295 1297 340 1300 390 1300 425 1275 455 1243 460" fill="none" stroke="#555" stroke-width=".8"/>
        <path d="M1240 292C1265 305 1280 335 1281 375 1281 415 1265 445 1235 460" fill="none" stroke="#8c8c8c" stroke-width=".7"/>
        <path d="M1153 352C1150 370 1153 395 1165 410" fill="none" stroke="#777" stroke-width=".7"/>
        <path d="M600 606V615L543 629 513 633 509 632 555 582 590 565 597 558 610 554 623 554 635 570 637 583 630 598 613 603z" fill="url(#tip)" stroke="#5f5f5f" stroke-width=".8"/>
        <path d="M623 554C635 560 637 575 637 583 635 595 625 601 613 603L600 606C606 596 616 601 626 590 628 578 620 562 608 560z" fill="#d0d0d0" stroke="#666" stroke-width=".7"/>
        <path d="M610 564C604 574 606 590 617 594M510 632L555 604 585 579 590 565M510 632L545 616 585 607 600 606M524 617L545 602 572 598 590 585M555 582L568 597 580 603M583 570C582 585 586 600 600 606M540 605L553 622M565 583L580 603M606 581L637 576" fill="none" stroke="#555" stroke-width=".7"/>
      </svg>
    </div>
  </section>

  <aside class="strip strip-r"><span class="vtext">Progress</span><span class="vtext">Log</span></aside>
</main>

<footer class="status">1.35 GB | 1.43 GB</footer>
</body>
</html>
```
FILE: styles.css
```css
* { box-sizing: border-box; }
html, body { height: 100%; }
body {
  margin: 0;
  width: 1354px;
  height: 724px;
  overflow: hidden;
  display: flex;
  flex-direction: column;
  background: #fcfcff;
  color: #1e1e1e;
  font: 11.5px/14px "Noto Sans", "Liberation Sans", sans-serif;
  letter-spacing: -.16px;
}
.defs { position: absolute; }
svg { display: block; flex: none; }
.axt { font-size: 8px; font-weight: 700; fill: #9a9a9a; letter-spacing: 0; }

/* title bar */
.titlebar { height: 22px; display: flex; align-items: center; background: #fff; }
.quick { width: 390px; display: flex; align-items: center; padding-left: 2px; }
.logo { margin-right: 7px; }
.qi { width: 15px; height: 15px; }
.q { width: 24px; display: flex; justify-content: center; }
.qsep { width: 1px; height: 13px; background: #9a9a9a; margin-right: 4px; }
.qsep-end { margin-left: 7px; }
.qarrow { margin-left: 2px; }
.title { flex: 1; text-align: center; padding-left: 92px; letter-spacing: 0; white-space: nowrap; }
.winctl { display: flex; width: 132px; }
.wc { width: 44px; height: 22px; display: flex; align-items: center; justify-content: center; }

/* tabs */
.tabs { height: 24px; background: #ecedf0; display: flex; align-items: stretch; padding: 1px 0 1px 4px; }
.tab { padding: 0 10px; line-height: 21px; letter-spacing: -.2px; }
.file { width: 55px; padding: 0; text-align: center; background: #3a87cb; color: #fff; }
.home { width: 53px; padding: 0; text-align: center; margin-bottom: -1px; background: #f9fbfe; color: #2a8ad8; margin-right: 1px; }
.help { margin-left: auto; width: 16px; height: 17px; margin-top: 2px; background: #3a87cb; color: #fff; text-align: center; line-height: 17px; font-weight: 700; }

/* ribbon */
.ribbon { height: 91px; display: flex; padding-left: 4px; background: #f9fbfe; border-bottom: 1px solid #c9ccd1; }
.group {
  display: flex;
  flex-direction: column;
  height: 90px;
  padding-top: 3px;
  background: linear-gradient(#d3d6da, #d3d6da) right 9px / 1px 75px no-repeat;
}
.gbody { flex: 1; display: flex; min-height: 0; }
.center { justify-content: center; }
.glabel { height: 18px; line-height: 18px; text-align: center; color: #7f8790; }
.g-app { width: 83px; }
.g-model { width: 173px; }
.g-def { width: 187px; }
.g-def .gbody { padding-left: 5px; }
.g-phys { width: 285px; }
.g-phys .gbody { padding-left: 9px; }
.g-mesh { width: 100px; }
.g-mesh .gbody { padding-left: 13px; }
.g-study { width: 94px; }
.g-study .gbody { padding-left: 11px; }
.g-res { width: 154px; }
.g-res .gbody { padding-left: 12px; }
.g-res .glabel { padding-left: 4px; }
.g-lay { width: 123px; }
.g-lay .gbody { padding-left: 12px; }
.g-lay .glabel { padding-left: 4px; }
.big { display: flex; flex-direction: column; align-items: center; padding-top: 5px; text-align: center; white-space: nowrap; }
.w80 { width: 80px; }
.w70 { width: 70px; }
.bigicon { height: 33px; display: flex; align-items: flex-start; justify-content: center; }
.blabel { line-height: 13px; display: block; }
.ic24 { width: 24px; height: 24px; }
.ic30 { width: 30px; height: 24px; }
.ic28 { width: 28px; height: 30px; }
.ic22 { width: 22px; height: 20px; }
.ic18 { width: 18px; height: 16px; }
.ic16 { width: 16px; height: 16px; }
.ic14 { width: 14px; height: 14px; }
.glyph-a { font-size: 32px; line-height: 28px; color: #1faa8f; font-weight: 300; }
.glyph-p { font-size: 25px; line-height: 28px; color: #3b94d8; font-weight: 300; }
.glyph-p small { font-size: 15px; margin-left: 1px; }
.glyph-as { font-size: 14px; color: #3b94d8; line-height: 14px; }
.glyph-f { font-size: 10px; color: #3b86c8; line-height: 14px; white-space: nowrap; }
.glyph-pi { font-size: 13px; color: #bcdcf4; line-height: 14px; }
.glyph-pi small { font-size: 9px; }
.col { display: flex; flex-direction: column; }
.small { height: 22px; display: flex; align-items: center; white-space: nowrap; }
.off { color: #a9b0b8; }
.sicon { width: 18px; display: flex; justify-content: center; margin-right: 1px; }
.w17 { width: 17px; margin-right: 1px; }
.w18 { width: 18px; margin-right: 0; }
.arrow {
  display: inline-block;
  width: 0;
  height: 0;
  margin-left: 5px;
  vertical-align: middle;
  border: 3px solid transparent;
  border-top: 3px solid #333;
  border-bottom: 0;
}
.arrow.solo { margin-left: 0; }
.a-9 { margin-left: 9px; }
.g-toggle { width: 123px; display: flex; gap: 2px; padding: 5px 0 1px 3px; }
.toggle {
  height: 84px;
  display: flex;
  flex-direction: column;
  align-items: center;
  text-align: center;
  border: 1px solid #d2d5d9;
  border-radius: 2px;
  background: linear-gradient(#f9fbfe 45%, #f0f1f3 70%, #f4f5f7);
}
.t-geo { width: 60px; }
.t-mat { width: 56px; }
.tglicon { height: 38px; padding-top: 4px; display: flex; justify-content: center; }
.t-mat .tglicon { padding-top: 8px; }

/* main */
.main { flex: 1; min-height: 0; display: flex; padding-top: 4px; }
.strip { width: 28px; display: flex; flex-direction: column; align-items: center; padding-top: 5px; gap: 14px; flex: none; }
.strip-l { padding-right: 4px; }
.strip-r { width: 22px; padding-left: 6px; }
.vtext { writing-mode: vertical-rl; color: #2a5a9a; line-height: 14px; letter-spacing: 0; }
.panel { display: flex; flex-direction: column; background: #fcfcff; }
.model { width: 434px; margin-right: 7px; height: 552px; border-left: 1px solid #d6d8dc; border-top: 1px solid #d6d8dc; padding-left: 4px; padding-right: 3px; }
.graphics { width: 863px; height: 557px; border: 1px solid #a9cbec; border-top-color: #d3e2f2; }
.phead { height: 32px; padding-top: 6px; display: flex; align-items: center; justify-content: space-between; flex: none; }
.ptitle { margin: 0; font-size: 19.5px; line-height: 26px; font-weight: 300; letter-spacing: 0; }
.mb { color: #2b6cb0; padding-left: 3px; }
.gr { color: #3b9af0; padding-left: 7px; }
.pctl { display: flex; align-items: center; gap: 6px; padding-right: 3px; margin-bottom: 4px; }
.pinic { width: 10px; height: 12px; }
.dkpin { filter: grayscale(1) brightness(.5); }
.arrow.dk { border-width: 4px; border-bottom: 0; border-top-color: #444; }
.arrow.bl { border-width: 4px; border-bottom: 0; border-top-color: #3a8bd0; }
.tbar { display: flex; align-items: center; flex: none; }
.mbar { height: 18px; }
.grow1, .grow2 { height: 20px; padding-left: 3.5px; }
.ti { width: 23px; height: 16px; }
.ti14 { width: 16px; height: 16px; }
.ti16 { width: 16px; height: 16px; }
.drop { width: 13px; height: 0; margin-right: 5px; flex: none; border-top: 5px solid #444; border-left: 6.5px solid transparent; border-right: 6.5px solid transparent; transform: scale(.85); }
.tsep { width: 1px; height: 17px; background: #d3d6da; margin: 0 3.5px 0 3px; flex: none; }
.tsep-w { margin-right: 5px; }
.act { display: flex; align-items: center; height: 18px; border: 1px solid #3c74b2; border-radius: 2px; background: linear-gradient(#b3d5f4, #8fc0ec); }
.act-w { width: 36px; padding-left: 2px; margin-left: 3px; gap: 2px; margin-right: 5px; }
.act-b { width: 18px; justify-content: center; margin-right: 2px; }
.drop-in { margin: 0; width: 13px; }

/* tree */
.tree { flex: 1; margin-top: 5px; margin-bottom: 4px; border: 1px solid #c4c6ca; background: #fff; }
.row { height: 18px; display: flex; align-items: center; white-space: nowrap; }
.l1 { padding-left: 20px; }
.l2 { padding-left: 40px; }
.l3 { padding-left: 60px; }
.picked { background: #d9d9db; }
.tw { width: 19px; height: 10px; }
.ri { width: 20px; height: 16px; display: flex; align-items: center; justify-content: center; }
.rt { margin-left: 3px; }
em { margin-left: 5px; font-style: italic; color: #333; }
.gl-p { color: #3b94d8; font-size: 13px; line-height: 16px; }
.gl-p small { font-size: 9px; }
.gl-a { color: #3b94d8; font-size: 13px; line-height: 16px; }

/* canvas */
.canvas { flex: 1; min-height: 0; position: relative; background: linear-gradient(#fcfcff, #e4f0fc); }
.scene { width: 100%; height: 100%; }
.cornercard { position: absolute; top: 8px; right: 4px; width: 20px; height: 18px; }

/* status */
.status { height: 24px; line-height: 34px; text-align: center; padding-left: 126px; letter-spacing: -.5px; background: #fcfcff; }
```
